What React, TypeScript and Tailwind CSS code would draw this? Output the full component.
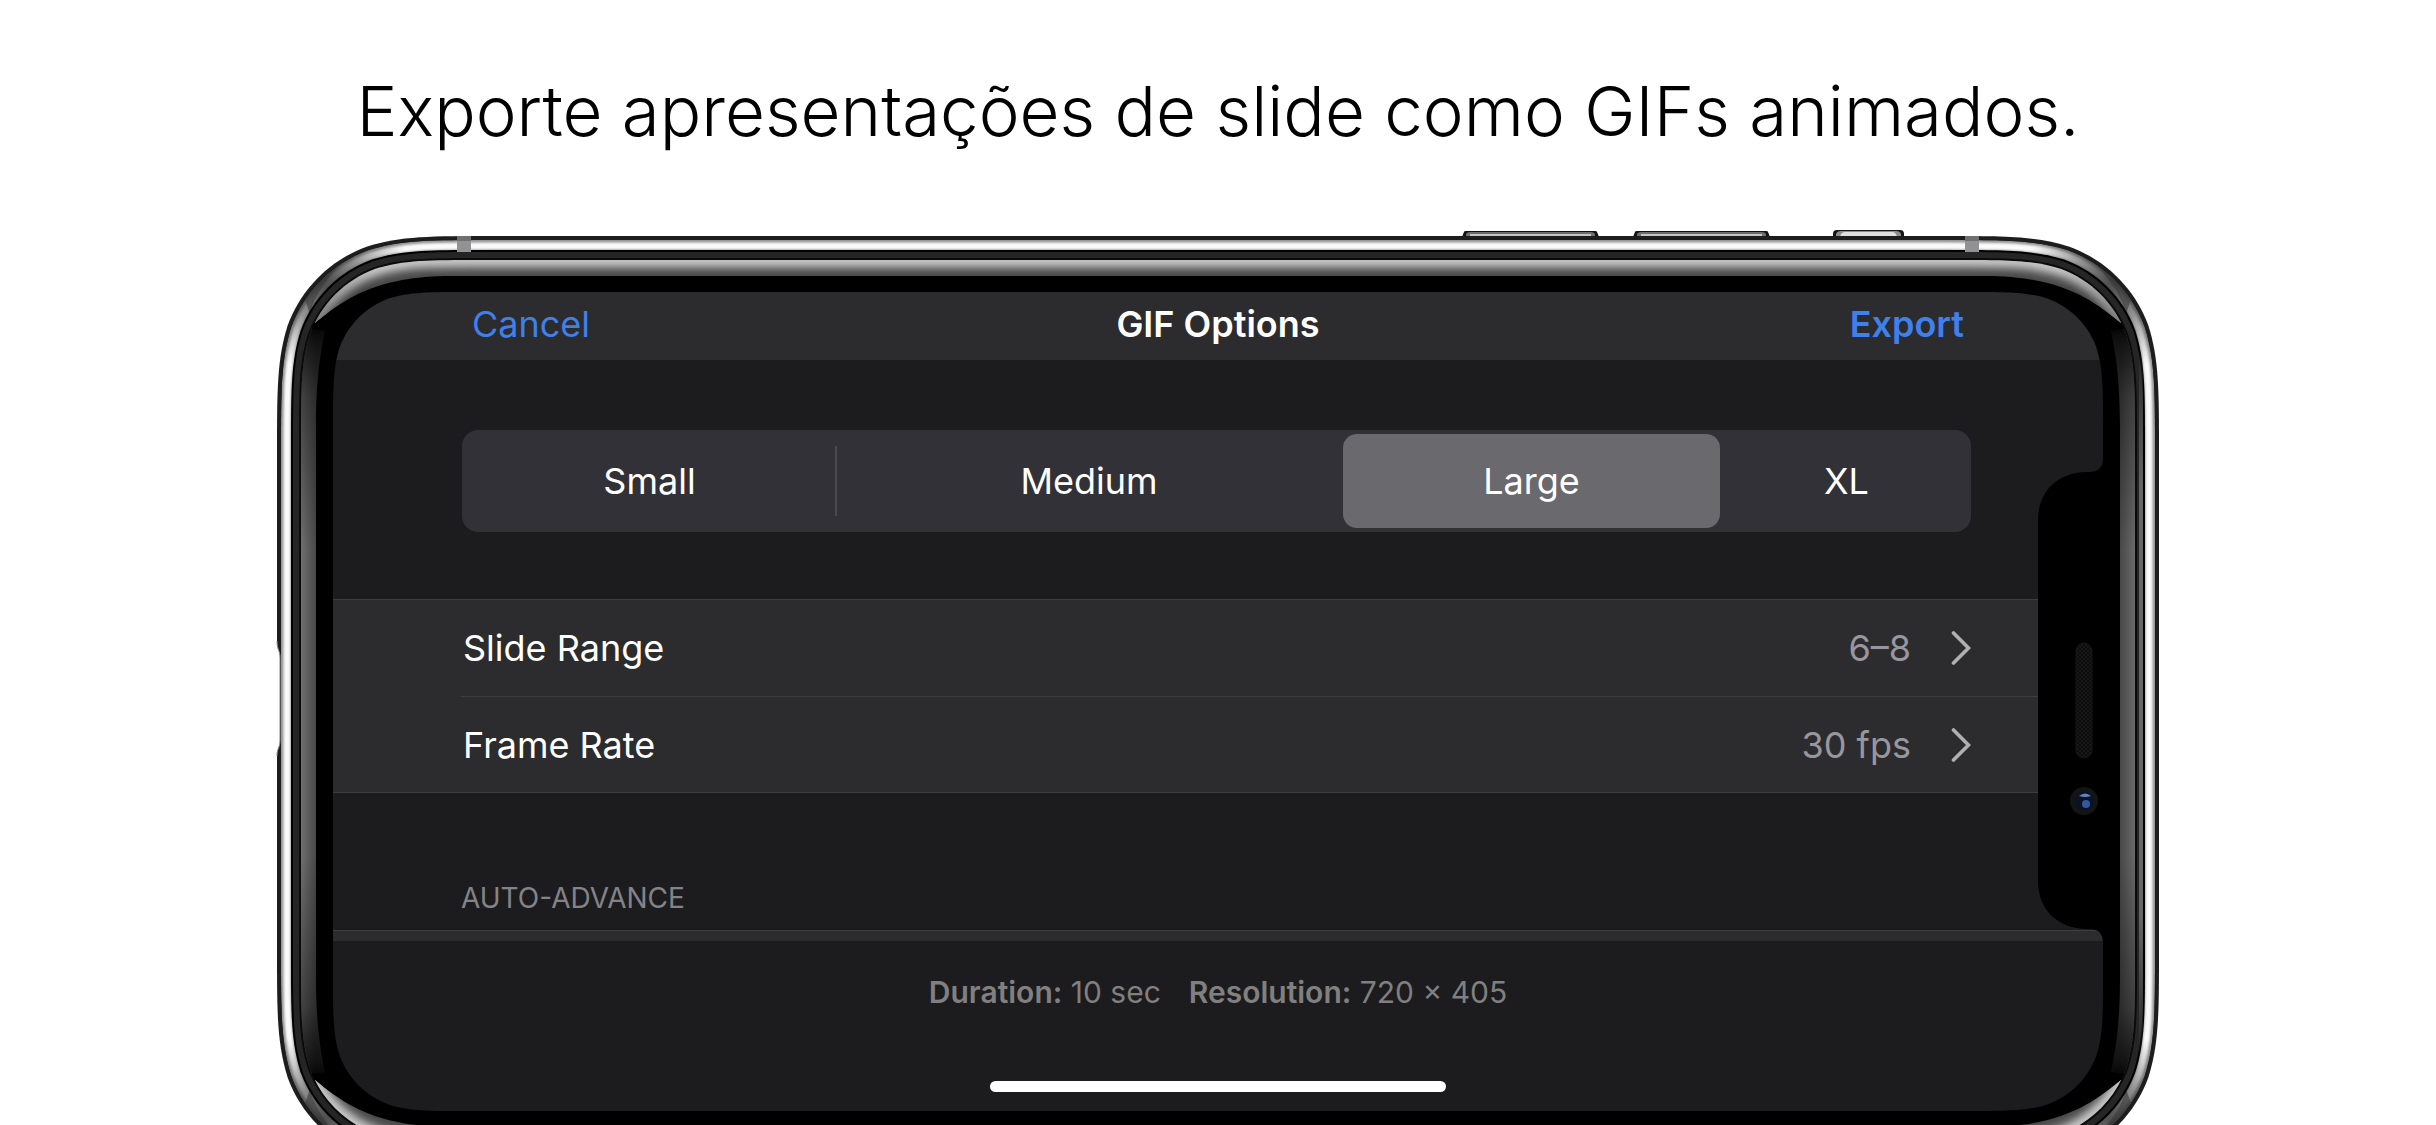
import { useState } from "react";

const FRAME_W = 1882;
const FRAME_H = 931;

/** Rounded rectangle with continuous corners, inset from the frame's edge. */
function shell(inset: number, r: number): string {
  const l = inset;
  const t = inset;
  const R = FRAME_W - inset;
  const b = FRAME_H - inset;
  const k = (n: number) => n * r;
  return [
    `M${l + k(1.529)},${t}`,
    `L${R - k(1.529)},${t}`,
    `C${R - k(1.088)},${t} ${R - k(0.868)},${t} ${R - k(0.631)},${t + k(0.075)}`,
    `C${R - k(0.373)},${t + k(0.169)} ${R - k(0.169)},${t + k(0.373)} ${R - k(0.075)},${t + k(0.631)}`,
    `C${R},${t + k(0.868)} ${R},${t + k(1.088)} ${R},${t + k(1.529)}`,
    `L${R},${b - k(1.529)}`,
    `C${R},${b - k(1.088)} ${R},${b - k(0.868)} ${R - k(0.075)},${b - k(0.631)}`,
    `C${R - k(0.169)},${b - k(0.373)} ${R - k(0.373)},${b - k(0.169)} ${R - k(0.631)},${b - k(0.075)}`,
    `C${R - k(0.868)},${b} ${R - k(1.088)},${b} ${R - k(1.529)},${b}`,
    `L${l + k(1.529)},${b}`,
    `C${l + k(1.088)},${b} ${l + k(0.868)},${b} ${l + k(0.631)},${b - k(0.075)}`,
    `C${l + k(0.373)},${b - k(0.169)} ${l + k(0.169)},${b - k(0.373)} ${l + k(0.075)},${b - k(0.631)}`,
    `C${l},${b - k(0.868)} ${l},${b - k(1.088)} ${l},${b - k(1.529)}`,
    `L${l},${t + k(1.529)}`,
    `C${l},${t + k(1.088)} ${l},${t + k(0.868)} ${l + k(0.075)},${t + k(0.631)}`,
    `C${l + k(0.169)},${t + k(0.373)} ${l + k(0.373)},${t + k(0.169)} ${l + k(0.631)},${t + k(0.075)}`,
    `C${l + k(0.868)},${t} ${l + k(1.088)},${t} ${l + k(1.529)},${t}Z`,
  ].join(" ");
}

const OUTER = shell(0, 142);
const STEEL = shell(4, 138);
const GASKET_EDGE = shell(14, 128);
const GASKET = shell(16, 126);
const GLASS_EDGE = shell(22, 120);
const GLASS = shell(24, 118);
const SCREEN = shell(56, 88);

const NOTCH =
  "M1832,222 L1826,222 C1826,232 1821,236 1812,236 L1808,236 C1780,237 1761,256 1761,284 L1761,645 C1761,673 1780,692 1808,693 L1812,693 C1821,693 1826,697 1826,707 L1832,707Z";

function VolumeKey({ x }: { x: number }) {
  return (
    <g transform={`translate(${x} -5)`}>
      <path d="M0,6 L2,1 Q2,0 4,0 H133 Q135,0 135,1 L137,6 V9 H0Z" fill="#111" />
      <path d="M4,8 V3 Q5,1 8,1 H129 Q132,1 133,3 V8Z" fill="#6e6e6e" />
      <path d="M8,8 V3 H129 V8Z" fill="#c6c6c6" />
    </g>
  );
}

function PhoneFrame() {
  return (
    <svg
      aria-hidden="true"
      className="pointer-events-none absolute inset-0 h-full w-full overflow-visible"
      viewBox={`0 0 ${FRAME_W} ${FRAME_H}`}
      preserveAspectRatio="none"
    >
      <defs>
        <mask id="opening" maskUnits="userSpaceOnUse" x="-10" y="-10" width="1902" height="951">
          <rect x="-10" y="-10" width="1902" height="951" fill="#fff" />
          <path d={SCREEN} fill="#000" />
          <path d={NOTCH} fill="#fff" />
        </mask>
        <clipPath id="steelClip">
          <path d={STEEL} />
        </clipPath>
        <clipPath id="glassClip">
          <path d={GLASS} />
        </clipPath>
        <clipPath id="rimClip">
          <path d="M38,87 C66,64 98,40 175,40 H1707 C1784,40 1816,64 1844,87 V0 H38Z" />
          <path d="M38,844 C66,867 98,891 175,891 H1707 C1784,891 1816,867 1844,844 V931 H38Z" />
        </clipPath>
        <filter id="soft" x="-5%" y="-5%" width="110%" height="110%">
          <feGaussianBlur stdDeviation="5" />
        </filter>
        <filter id="softer" x="-5%" y="-5%" width="110%" height="110%">
          <feGaussianBlur stdDeviation="1" />
        </filter>
        <linearGradient id="sideLeft" gradientUnits="userSpaceOnUse" x1="23" y1="0" x2="39" y2="0">
          <stop offset="0" stopColor="#727272" />
          <stop offset="1" stopColor="#484848" />
        </linearGradient>
        <linearGradient id="sideRight" gradientUnits="userSpaceOnUse" x1="1843" y1="0" x2="1859" y2="0">
          <stop offset="0" stopColor="#484848" />
          <stop offset="1" stopColor="#6c6c6c" />
        </linearGradient>
        <linearGradient id="sideFade" gradientUnits="userSpaceOnUse" x1="0" y1="84" x2="0" y2="847">
          <stop offset="0" stopColor="#000" />
          <stop offset="0.03" stopColor="#000" stopOpacity="0.75" />
          <stop offset="0.1" stopColor="#000" stopOpacity="0.4" />
          <stop offset="0.3" stopColor="#000" stopOpacity="0" />
          <stop offset="0.7" stopColor="#000" stopOpacity="0" />
          <stop offset="0.9" stopColor="#000" stopOpacity="0.4" />
          <stop offset="0.97" stopColor="#000" stopOpacity="0.75" />
          <stop offset="1" stopColor="#000" />
        </linearGradient>
        <linearGradient id="gasketRight" gradientUnits="userSpaceOnUse" x1="0" y1="110" x2="0" y2="821">
          <stop offset="0" stopColor="#666" stopOpacity="0" />
          <stop offset="0.2" stopColor="#666" />
          <stop offset="0.8" stopColor="#666" />
          <stop offset="1" stopColor="#666" stopOpacity="0" />
        </linearGradient>
        <radialGradient id="cornerShade" gradientUnits="userSpaceOnUse" cx="44" cy="44" r="90">
          <stop offset="0" stopColor="#222" stopOpacity="0.85" />
          <stop offset="0.45" stopColor="#333" stopOpacity="0.5" />
          <stop offset="1" stopColor="#555" stopOpacity="0" />
        </radialGradient>
        <radialGradient id="tipShade" gradientUnits="userSpaceOnUse" cx="38" cy="87" r="80">
          <stop offset="0" stopColor="#000" stopOpacity="0.35" />
          <stop offset="1" stopColor="#000" stopOpacity="0" />
        </radialGradient>
        <pattern id="mesh" width="4" height="4" patternUnits="userSpaceOnUse">
          <rect width="4" height="4" fill="#0b0b0b" />
          <circle cx="1" cy="1" r="1" fill="#1c1c1c" />
          <circle cx="3" cy="3" r="1" fill="#1c1c1c" />
        </pattern>
        <g id="cornerMark">
          <rect width="140" height="140" fill="url(#cornerShade)" />
          <path d="M33,78 C36,62 50,42 70,20 L60,14 L24,52Z" fill="#3a3a3a" opacity="0.6" />
        </g>
      </defs>

      <VolumeKey x={1185} />
      <VolumeKey x={1356} />
      <g transform="translate(1556 -6)">
        <path d="M0,9 V4 Q0,0 4,0 H67 Q71,0 71,4 V9Z" fill="#141414" />
        <path d="M3,8 V4 Q4,1 8,1 H63 Q67,1 68,4 V8Z" fill="#8c8c8c" />
        <path d="M7,7 Q8,2 12,2 H59 Q63,2 64,7Z" fill="#e0e0e0" />
      </g>

      <g mask="url(#opening)">
        <path d={OUTER} fill="#1d1d1e" />
        <g clipPath="url(#steelClip)">
          <path d={STEEL} fill="#949494" />
          <path d={shell(10, 132)} fill="none" stroke="#fafafa" strokeWidth="7" filter="url(#softer)" />
          <use href="#cornerMark" />
          <use href="#cornerMark" transform="translate(1882 0) scale(-1 1)" />
          <use href="#cornerMark" transform="translate(0 931) scale(1 -1)" />
          <use href="#cornerMark" transform="translate(1882 931) scale(-1 -1)" />
        </g>
        <path d={GASKET_EDGE} fill="#000" />
        <path d={GASKET} fill="#252526" />
        <path d="M1862,110 H1866 V821 H1862Z" fill="url(#gasketRight)" />
        <path d={GLASS_EDGE} fill="#0a0a0a" />
        <path d={GLASS} fill="#000" />
        <g clipPath="url(#glassClip)">
          <path
            d="M0,88 L48,95 C44,115 39,140 39,190 V741 C39,791 44,816 48,836 L0,843Z"
            fill="url(#sideLeft)"
          />
          <path
            d="M1882,88 L1834,95 C1838,115 1843,140 1843,190 V741 C1843,791 1838,816 1834,836 L1882,843Z"
            fill="url(#sideRight)"
          />
          <rect x="20" y="84" width="30" height="763" fill="url(#sideFade)" />
          <rect x="1832" y="84" width="30" height="763" fill="url(#sideFade)" />
          <g clipPath="url(#rimClip)">
            <path d={GLASS} fill="#484848" />
            <path d={GLASS} fill="none" stroke="#d0d0d0" strokeWidth="14" filter="url(#soft)" />
            <circle cx="38" cy="87" r="80" fill="url(#tipShade)" />
            <circle cx="38" cy="87" r="80" fill="url(#tipShade)" transform="translate(1882 0) scale(-1 1)" />
          </g>
        </g>
      </g>

      <rect x="180" y="0" width="14" height="16" fill="#929294" />
      <rect x="180" y="0" width="14" height="5" fill="#707072" />
      <rect x="1688" y="0" width="14" height="16" fill="#929294" />
      <rect x="1688" y="0" width="14" height="5" fill="#707072" />
      <path d="M-2,405 H0 C0,414 3,414 3,422 V504 C3,512 0,512 0,520 H-2Z" fill="#fff" />
      <path d="M0,405 C0,414 3,414 3,422 V504 C3,512 0,512 0,520" fill="none" stroke="#8a8a8a" strokeWidth="1" />

      <rect x="1799" y="407" width="16" height="115" rx="8" fill="url(#mesh)" stroke="#161616" />
      <circle cx="1807" cy="565" r="14" fill="#121415" />
      <circle cx="1807" cy="565" r="9" fill="#0a1226" />
      <path d="M1802,560 Q1808,555 1814,560 Q1808,562 1802,560Z" fill="#5a86c4" />
      <circle cx="1809" cy="568" r="4" fill="#2f59a4" />
    </svg>
  );
}

const SIZES = ["Small", "Medium", "Large", "XL"];

function SizePicker() {
  const [size, setSize] = useState("Large");
  return (
    <div
      role="radiogroup"
      aria-label="Size"
      className="grid h-[102px] grid-cols-[375fr_504fr_381fr_249fr] rounded-2xl bg-[#323137]"
    >
      {SIZES.map((name) => (
        <label
          key={name}
          className={
            "relative flex cursor-pointer items-center justify-center py-1 " +
            (name === "Small" ? "after:absolute after:right-0 after:h-[70px] after:w-0.5 after:bg-[#4a494f]" : "")
          }
        >
          <input
            type="radio"
            name="size"
            value={name}
            checked={size === name}
            onChange={() => setSize(name)}
            className="peer sr-only"
          />
          <span className="mx-0.5 flex h-full w-full items-center justify-center rounded-[14px] text-white peer-checked:bg-[#6a696e]">
            {name}
          </span>
        </label>
      ))}
    </div>
  );
}

function OptionRow({ label, value, divided }: { label: string; value: string; divided?: boolean }) {
  return (
    <button
      type="button"
      className={
        "flex h-24 w-full items-center pr-[132px] text-left " + (divided ? "border-t border-[#3d3d40]" : "")
      }
    >
      <span className="flex-1 pl-0.5 text-white">{label}</span>
      <span className="text-[#98979e]">{value}</span>
      <svg aria-hidden="true" className="ml-10 h-9 w-5" viewBox="0 0 20 36" fill="none">
        <path d="M2.5,3 L17.5,18 L2.5,33" stroke="#b0b0b2" strokeWidth="3.6" strokeLinecap="round" strokeLinejoin="miter" />
      </svg>
    </button>
  );
}

export default function App() {
  return (
    <main className="flex h-screen flex-col items-center overflow-hidden bg-white font-['Inter',sans-serif]">
      <h1 className="flex h-[236px] shrink-0 items-center justify-center pb-[14px] text-center text-[69px] leading-none font-light text-black">
        Exporte apresentações de slide como GIFs animados.
      </h1>

      <section className="relative w-full max-w-[1882px] shrink-0 p-14 text-[36px] leading-none">
        <div className="bg-[#1c1c1e]">
          <header className="grid h-[68px] grid-cols-3 items-center bg-[#2c2c2e] px-[139px] pb-1">
            <button type="button" className="justify-self-start text-[#4080ec]">
              Cancel
            </button>
            <h2 className="text-center font-semibold text-white">GIF Options</h2>
            <button type="button" className="justify-self-end font-semibold text-[#4080ec]">
              Export
            </button>
          </header>

          <div className="pt-[70px] pr-[132px] pb-[67px] pl-[129px]">
            <SizePicker />
          </div>

          <div className="border-y border-[#3d3d40] bg-[#2c2c2e] pl-32">
            <OptionRow label="Slide Range" value="6–8" />
            <OptionRow label="Frame Rate" value="30 fps" divided />
          </div>

          <h3 className="flex h-[137px] items-end pb-[18px] pl-32 text-[28px] text-[#848388]">AUTO-ADVANCE</h3>
          <div className="h-[11px] border-t border-[#3d3d40] bg-[#2c2c2e]" />

          <footer className="flex h-[170px] flex-col items-center justify-between pt-9 pb-[19px] text-[30px] text-[#808080]">
            <p className="flex gap-7">
              <span>
                <b className="font-semibold">Duration:</b> 10 sec
              </span>
              <span>
                <b className="font-semibold">Resolution:</b> 720 × 405
              </span>
            </p>
            <div className="h-[11px] w-[456px] rounded-full bg-white" />
          </footer>
        </div>
        <PhoneFrame />
      </section>
    </main>
  );
}
